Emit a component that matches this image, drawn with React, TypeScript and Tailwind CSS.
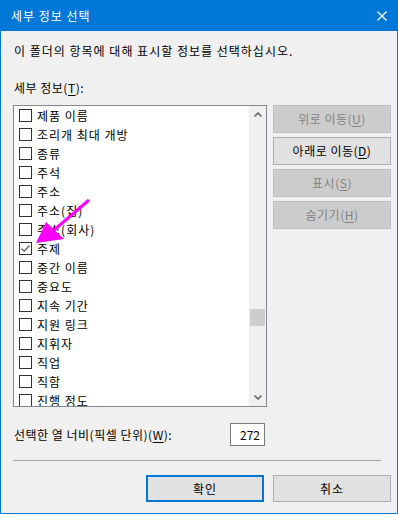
import { ReactNode } from "react";

const items = [
  "제품 이름",
  "조리개 최대 개방",
  "종류",
  "주석",
  "주소",
  "주소(집)",
  "주소(회사)",
  "주제",
  "중간 이름",
  "중요도",
  "지속 기간",
  "지원 링크",
  "지휘자",
  "직업",
  "직함",
  "진행 정도",
];

const font = "font-['Noto_Sans_CJK_KR','Noto_Sans',sans-serif]";

const Key = ({ children }: { children: ReactNode }) => (
  <>
    (<span className="underline underline-offset-2">{children}</span>)
  </>
);

const SideButton = ({
  label,
  k,
  disabled,
}: {
  label: string;
  k: string;
  disabled?: boolean;
}) => (
  <button
    className={
      disabled
        ? "h-[28px] w-full border border-[#bfbfbf] bg-[#cccccc] text-[#838383] text-[12px] leading-none tracking-[0.5px]"
        : "h-[28px] w-full border border-[#adadad] bg-[#e1e1e1] text-black text-[12px] leading-none tracking-[0.5px]"
    }
  >
    {label}
    <Key>{k}</Key>
  </button>
);

const App = () => {
  return (
    <div
      className={`relative w-[398px] h-[514px] border border-[#0078d7] bg-[#f0f0f0] flex flex-col overflow-hidden ${font}`}
    >
      {/* title bar */}
      <div className="h-[30px] bg-[#0078d7] flex items-center justify-between pl-[10px] pr-[10px]">
        <span className="text-white text-[12px] tracking-[1px]">세부 정보 선택</span>
        <svg width="10" height="10" viewBox="0 0 10 10">
          <path d="M0.5 0.5 L9.5 9.5 M9.5 0.5 L0.5 9.5" stroke="white" strokeWidth="1.2" />
        </svg>
      </div>

      <div className="flex flex-col pl-[12px] pr-[6px] text-[12px] text-black tracking-[1px]">
        <div className="mt-[12px] leading-[16px] pl-px">
          이 폴더의 항목에 대해 표시할 정보를 선택하십시오.
        </div>
        <div className="mt-[21px] leading-[16px] pl-px tracking-[0.5px]">
          세부 정보<Key>T</Key>:
        </div>

        <div className="mt-[9px] flex gap-[6px]">
          {/* list */}
          <div className="w-[254px] h-[302px] border border-[#828790] bg-white flex">
            <div className="flex-1 overflow-hidden">
              {items.map((it) => (
                <div key={it} className="h-[19px] flex items-center pl-[5px]">
                  <div className="w-[13px] h-[13px] border border-[#333333] bg-white flex items-center justify-center shrink-0">
                    {it === "주제" && (
                      <svg width="11" height="11" viewBox="0 0 11 11">
                        <path d="M1.5 5.5 L4.2 8.2 L9.5 2.5" fill="none" stroke="#555555" strokeWidth="1.2" />
                      </svg>
                    )}
                  </div>
                  <span className="ml-[5px] leading-none whitespace-nowrap">{it}</span>
                </div>
              ))}
            </div>
            <div className="w-[17px] bg-[#f0f0f0] flex flex-col">
              <div className="h-[17px] flex items-center justify-center">
                <svg width="8" height="5" viewBox="0 0 8 5">
                  <path d="M0.5 4.5 L4 1 L7.5 4.5" fill="none" stroke="#606060" strokeWidth="1.5" />
                </svg>
              </div>
              <div className="flex-1">
                <div className="mt-[186px] mx-px h-[17px] bg-[#cdcdcd]" />
              </div>
              <div className="h-[17px] flex items-center justify-center">
                <svg width="8" height="5" viewBox="0 0 8 5">
                  <path d="M0.5 0.5 L4 4 L7.5 0.5" fill="none" stroke="#606060" strokeWidth="1.5" />
                </svg>
              </div>
            </div>
          </div>

          {/* side buttons */}
          <div className="w-[118px] flex flex-col gap-[4px]">
            <SideButton label="위로 이동" k="U" disabled />
            <SideButton label="아래로 이동" k="D" />
            <SideButton label="표시" k="S" disabled />
            <SideButton label="숨기기" k="H" disabled />
          </div>
        </div>

        {/* width row */}
        <div className="mt-[16px] flex items-center h-[23px]">
          <div className="w-[217px] pl-px whitespace-nowrap tracking-[0.5px]">
            선택한 열 너비(픽셀 단위)<Key>W</Key>:
          </div>
          <div className="w-[35px] h-[23px] border border-[#7a7a7a] bg-white flex items-center justify-end pr-[4px] tracking-normal">
            272
          </div>
        </div>

        <div className="mt-[14px] w-[368px] h-px bg-[#a0a0a0]" />

        <div className="mt-[14px] flex justify-end gap-[9px]">
          <button className="w-[118px] h-[27px] border-2 border-[#0078d7] bg-[#e1e1e1] text-[12px] leading-none tracking-[1px]">
            확인
          </button>
          <button className="w-[118px] h-[27px] border border-[#adadad] bg-[#e1e1e1] text-[12px] leading-none tracking-[1px]">
            취소
          </button>
        </div>
      </div>

      {/* annotation arrow */}
      <svg
        className="absolute left-0 top-0 pointer-events-none"
        width="398"
        height="514"
        viewBox="0 0 398 514"
      >
        <line x1="88" y1="199" x2="52" y2="230" stroke="#ff00ff" strokeWidth="3" />
        <polygon points="35,242 45,221 63,238" fill="#ff00ff" />
      </svg>
    </div>
  );
};

export default App;
